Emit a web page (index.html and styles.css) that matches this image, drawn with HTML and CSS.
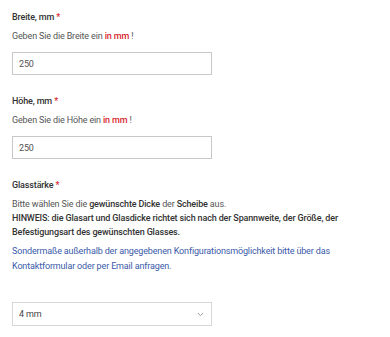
FILE: index.html
```html
<!DOCTYPE html>
<html lang="de">
<head>
    <meta charset="UTF-8">
    <meta name="viewport" content="width=device-width, initial-scale=1.0">
    <title>Konfigurator</title>
    <link rel="stylesheet" href="styles.css">
</head>
<body>
    <div class="config-form">
        <div class="field">
            <label class="field-label">Breite, mm <span class="req">*</span></label>
            <p class="field-hint">Geben Sie die Breite ein <b class="red">in mm</b> !</p>
            <input type="text" class="field-input" value="250">
        </div>

        <div class="field">
            <label class="field-label">Höhe, mm <span class="req">*</span></label>
            <p class="field-hint">Geben Sie die Höhe ein <b class="red">in mm</b> !</p>
            <input type="text" class="field-input" value="250">
        </div>

        <div class="field">
            <label class="field-label">Glasstärke <span class="req">*</span></label>
            <p class="field-hint long">Bitte wählen Sie die <b>gewünschte Dicke</b> der <b>Scheibe</b> aus.<br>
            <b>HINWEIS: die Glasart und Glasdicke richtet sich nach der Spannweite, der Größe, der Befestigungsart des gewünschten Glasses.</b></p>
            <p class="field-note">Sondermaße außerhalb der angegebenen Konfigurationsmöglichkeit bitte über das Kontaktformular oder per Email anfragen.</p>
            <div class="select-box">
                <span>4 mm</span>
                <svg class="chevron" width="7" height="5" viewBox="0 0 7 5"><path d="M1 1.2 L3.5 3.6 L6 1.2" fill="none" stroke="#9a9a9a" stroke-width="1"/></svg>
            </div>
        </div>
    </div>
</body>
</html>
```

FILE: styles.css
```css
body {
    margin: 0;
    font-family: "Roboto", "Liberation Sans", sans-serif;
    font-size: 9px;
    letter-spacing: -0.15px;
    color: #333;
    background-color: #fff;
}
.config-form {
    padding: 10px 12px 0 12px;
    width: 345px;
}
.field {
    margin-bottom: 19px;
}
.field-label {
    display: block;
    font-weight: 500;
    line-height: 14px;
    color: #333;
}
.req {
    color: #d9262c;
}
.field-hint {
    margin: 5px 0 9px 0;
    line-height: 14px;
    color: #555;
}
.field-hint b {
    font-weight: 500;
    color: #333;
}
.field-hint b.red {
    color: #d9262c;
}
.field-hint.long {
    margin-bottom: 5px;
}
.field-note {
    margin: 0 0 28px 0;
    line-height: 15px;
    color: #3a5aa8;
}
.field-input {
    display: block;
    box-sizing: border-box;
    width: 200px;
    height: 23px;
    padding: 0 6px;
    border: 1px solid #c8c8c8;
    font-family: inherit;
    font-size: 9px;
    letter-spacing: -0.15px;
    color: #555;
    outline: none;
}
.select-box {
    box-sizing: border-box;
    width: 200px;
    height: 24px;
    padding: 0 7px 0 6px;
    border: 1px solid #d6d6d6;
    display: flex;
    align-items: center;
    justify-content: space-between;
    color: #444;
}
```
